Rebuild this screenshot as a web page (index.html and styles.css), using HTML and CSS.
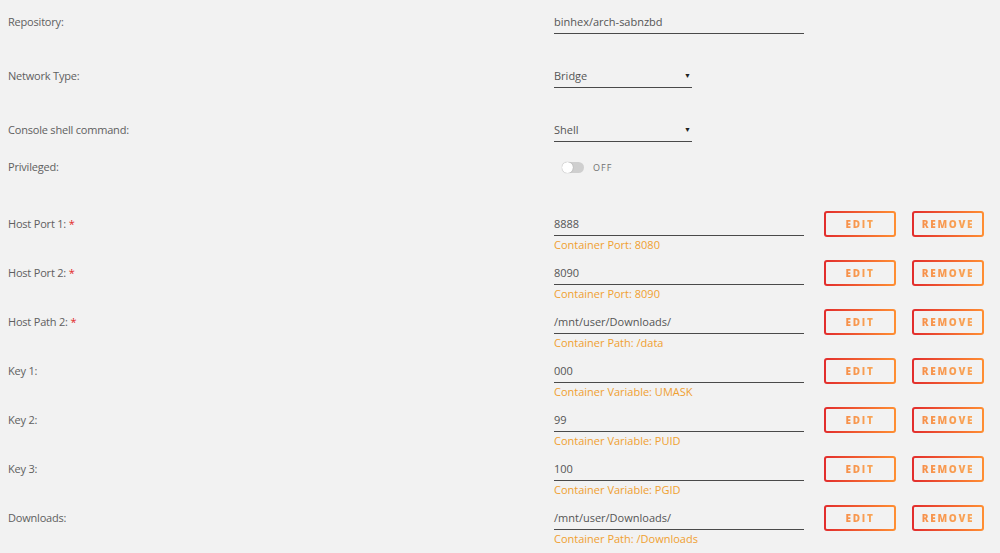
FILE: index.html
```html
<!DOCTYPE html>
<html lang="en">
<head>
    <meta charset="UTF-8">
    <title>Update Container</title>
    <link rel="stylesheet" href="styles.css">
</head>
<body>
    <div class="form">
        <div class="row row-top">
            <div class="label">Repository:</div>
            <div class="field"><div class="input">binhex/arch-sabnzbd</div></div>
        </div>
        <div class="row row-top">
            <div class="label">Network Type:</div>
            <div class="field"><div class="input select">Bridge<span class="caret">&#9660;</span></div></div>
        </div>
        <div class="row row-console">
            <div class="label">Console shell command:</div>
            <div class="field"><div class="input select">Shell<span class="caret">&#9660;</span></div></div>
        </div>
        <div class="row row-priv">
            <div class="label">Privileged:</div>
            <div class="field">
                <div class="switch"><span class="track"><span class="knob"></span></span><span class="switch-text">OFF</span></div>
            </div>
        </div>

        <div class="row config">
            <div class="label">Host Port 1: <span class="req">*</span></div>
            <div class="field"><div class="input">8888</div><div class="hint">Container Port: 8080</div></div>
            <button class="btn"><span>Edit</span></button>
            <button class="btn"><span>Remove</span></button>
        </div>
        <div class="row config">
            <div class="label">Host Port 2: <span class="req">*</span></div>
            <div class="field"><div class="input">8090</div><div class="hint">Container Port: 8090</div></div>
            <button class="btn"><span>Edit</span></button>
            <button class="btn"><span>Remove</span></button>
        </div>
        <div class="row config">
            <div class="label">Host Path 2: <span class="req">*</span></div>
            <div class="field"><div class="input">/mnt/user/Downloads/</div><div class="hint">Container Path: /data</div></div>
            <button class="btn"><span>Edit</span></button>
            <button class="btn"><span>Remove</span></button>
        </div>
        <div class="row config">
            <div class="label">Key 1:</div>
            <div class="field"><div class="input">000</div><div class="hint">Container Variable: UMASK</div></div>
            <button class="btn"><span>Edit</span></button>
            <button class="btn"><span>Remove</span></button>
        </div>
        <div class="row config">
            <div class="label">Key 2:</div>
            <div class="field"><div class="input">99</div><div class="hint">Container Variable: PUID</div></div>
            <button class="btn"><span>Edit</span></button>
            <button class="btn"><span>Remove</span></button>
        </div>
        <div class="row config">
            <div class="label">Key 3:</div>
            <div class="field"><div class="input">100</div><div class="hint">Container Variable: PGID</div></div>
            <button class="btn"><span>Edit</span></button>
            <button class="btn"><span>Remove</span></button>
        </div>
        <div class="row config">
            <div class="label">Downloads:</div>
            <div class="field"><div class="input">/mnt/user/Downloads/</div><div class="hint">Container Path: /Downloads</div></div>
            <button class="btn"><span>Edit</span></button>
            <button class="btn"><span>Remove</span></button>
        </div>
    </div>
</body>
</html>
```

FILE: styles.css
```css
body, html {
    margin: 0;
    padding: 0;
    background: #f2f2f2;
    font-family: 'Open Sans', sans-serif;
    font-size: 11px;
    color: #606060;
}
.form {
    padding-top: 10px;
}
.row {
    display: grid;
    grid-template-columns: 526px 250px 72px 72px;
    column-gap: 20px;
    padding-left: 8px;
    align-items: start;
}
.row .btn + .btn {
    margin-left: -4px;
}
.row-top {
    margin-bottom: 30px;
}
.row-console {
    margin-bottom: 13px;
}
.row-priv {
    margin-bottom: 33px;
}
.config {
    height: 49px;
}
.label {
    line-height: 24px;
    white-space: nowrap;
    letter-spacing: -0.2px;
}
.req {
    color: #e22828;
}
.input {
    height: 23px;
    line-height: 24px;
    border-bottom: 1px solid #4a4a4a;
    color: #555;
}
.select {
    width: 138px;
    display: flex;
    justify-content: space-between;
}
.caret {
    font-size: 7px;
    color: #222;
    margin-right: 1px;
}
.hint {
    color: #f0a030;
    line-height: 18px;
}
.switch {
    display: flex;
    align-items: center;
    height: 24px;
    padding-left: 8px;
}
.track {
    display: inline-block;
    width: 22px;
    height: 11px;
    border-radius: 6px;
    background: #cfcfcf;
    position: relative;
}
.knob {
    position: absolute;
    left: 0;
    top: 0;
    width: 11px;
    height: 11px;
    border-radius: 50%;
    background: #fff;
    box-shadow: 0 0 1px rgba(0, 0, 0, 0.4);
}
.switch-text {
    margin-left: 9px;
    font-size: 9px;
    letter-spacing: 1px;
    color: #707070;
}
.btn {
    width: 72px;
    height: 26px;
    margin-top: -1px;
    padding: 0;
    border: 2px solid transparent;
    border-radius: 3px;
    background: linear-gradient(#f2f2f2, #f2f2f2) padding-box,
                linear-gradient(90deg, #e22d2d, #ff8f33) border-box;
    font-family: 'Open Sans', sans-serif;
    font-size: 10px;
    font-weight: 800;
    letter-spacing: 1.7px;
    text-transform: uppercase;
    cursor: pointer;
}
.btn span {
    background: linear-gradient(90deg, #f7904a, #f9a658);
    -webkit-background-clip: text;
    background-clip: text;
    color: transparent;
}
```
